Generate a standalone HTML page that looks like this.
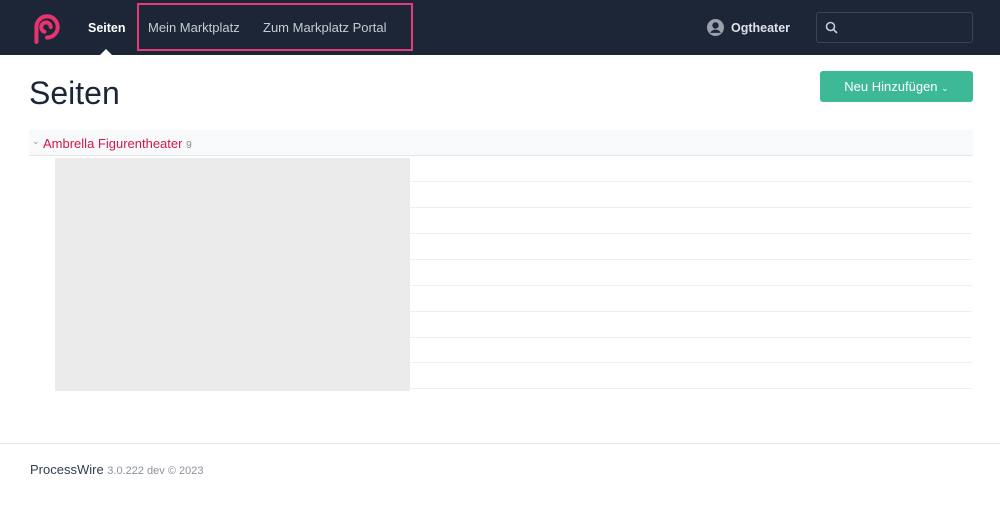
<!DOCTYPE html>
<html><head><style>
*{margin:0;padding:0;box-sizing:border-box}
body{width:1000px;height:532px;background:#fff;font-family:"Liberation Sans",sans-serif;position:relative;overflow:hidden}
.hd{position:absolute;left:0;top:0;width:1000px;height:55px;background:#1c2636}
.t{position:absolute;font-size:13px;white-space:nowrap}
.ln{position:absolute;left:55px;width:917px;height:1px;background:#efefef}
</style></head><body>
<div class="hd">
<svg style="position:absolute;left:29px;top:11px" width="34" height="34" viewBox="0 0 32 32"><path d="M7 29 V15 A10 10 0 1 1 17 25 M14.5 19.5 A4.5 4.5 0 1 1 20.5 15" fill="none" stroke="#e8336e" stroke-width="3.8" stroke-linecap="round"/></svg>
<div class="t" style="left:88px;top:21px;color:#fff;font-weight:bold;font-size:12.5px">Seiten</div>
<div style="position:absolute;left:100px;top:49px;border:6px solid transparent;border-bottom-color:#fff;border-top:0;width:0"></div>
<div style="position:absolute;left:137px;top:3px;width:276px;height:48px;border:2px solid #e23d78"></div>
<div class="t" style="left:148px;top:20px;color:#c6cbd3">Mein Marktplatz</div>
<div class="t" style="left:263px;top:20px;color:#c6cbd3">Zum Markplatz Portal</div>
<svg style="position:absolute;left:707px;top:19px" width="17" height="17" viewBox="0 0 16 16"><circle cx="8" cy="8" r="8" fill="#9aa2ad"/><circle cx="8" cy="6" r="3" fill="#1c2636"/><path d="M3 13 C5 9 11 9 13 13" fill="#1c2636"/></svg>
<div class="t" style="left:731px;top:21px;color:#dfe3e8;font-weight:bold;font-size:12.5px">Ogtheater</div>
<div style="position:absolute;left:816px;top:12px;width:157px;height:31px;border:1px solid #3a4658;border-radius:3px"></div>
<svg style="position:absolute;left:825px;top:21px" width="13" height="13" viewBox="0 0 13 13"><circle cx="5.5" cy="5.5" r="4" fill="none" stroke="#c6cbd3" stroke-width="1.6"/><path d="M8.5 8.5 L12 12" stroke="#c6cbd3" stroke-width="1.6"/></svg>
</div>
<div class="t" style="left:29px;top:75px;font-size:32px;color:#1c2636">Seiten</div>
<div style="position:absolute;left:820px;top:71px;width:153px;height:31px;background:#3eb998;border-radius:3px;color:#fff;font-size:13px;text-align:center;line-height:31px">Neu Hinzufügen <span style="font-size:9px">⌄</span></div>
<div style="position:absolute;left:29px;top:130px;width:944px;height:26px;background:#f8f9fa;border-bottom:1px solid #e4e6ea"></div>
<div class="t" style="left:32px;top:136px;color:#999;font-size:9px">⌄</div>
<div class="t" style="left:43px;top:136px;color:#d0194a">Ambrella Figurentheater <span style="color:#888;font-size:10px">9</span></div>
<div class="ln" style="top:181px"></div><div class="ln" style="top:207px"></div><div class="ln" style="top:233px"></div><div class="ln" style="top:259px"></div><div class="ln" style="top:285px"></div><div class="ln" style="top:311px"></div><div class="ln" style="top:337px"></div><div class="ln" style="top:362px"></div><div class="ln" style="top:388px"></div>
<div style="position:absolute;left:55px;top:158px;width:355px;height:233px;background:#ebebeb"></div>
<div style="position:absolute;left:0;top:443px;width:1000px;height:1px;background:#e2e5ea"></div>
<div class="t" style="left:30px;top:462px;color:#2f3e52">ProcessWire <span style="color:#8a929c;font-size:11px">3.0.222 dev © 2023</span></div>
</body></html>
